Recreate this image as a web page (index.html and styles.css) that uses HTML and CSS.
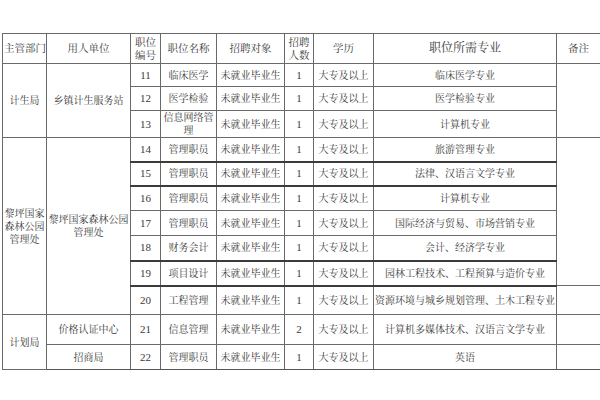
FILE: index.html
```html
<!DOCTYPE html>
<html lang="zh-CN">
<head>
<meta charset="utf-8">
<link rel="stylesheet" href="styles.css">
</head>
<body>
<div class="page">
<table class="grid">
  <colgroup>
    <col class="c1"><col class="c2"><col class="c3"><col class="c4"><col class="c5"><col class="c6"><col class="c7"><col class="c8"><col class="c9">
  </colgroup>
  <tr class="h r-head">
    <td>主管部门</td><td>用人单位</td><td>职位<br>编号</td><td>职位名称</td><td>招聘对象</td><td>招聘<br>人数</td><td>学历</td><td class="big">职位所需专业</td><td>备注</td>
  </tr>
  <tr class="r23">
    <td rowspan="3">计生局</td><td rowspan="3">乡镇计生服务站</td><td class="num">11</td><td>临床医学</td><td>未就业毕业生</td><td class="num">1</td><td>大专及以上</td><td>临床医学专业</td><td rowspan="3"></td>
  </tr>
  <tr class="r24">
    <td class="num">12</td><td>医学检验</td><td>未就业毕业生</td><td class="num">1</td><td>大专及以上</td><td>医学检验专业</td>
  </tr>
  <tr class="r25">
    <td class="num">13</td><td class="tight">信息网络管<br>理</td><td>未就业毕业生</td><td class="num">1</td><td>大专及以上</td><td>计算机专业</td>
  </tr>
  <tr class="r24 thick">
    <td rowspan="7">黎坪国家<br>森林公园<br>管理处</td><td rowspan="7">黎坪国家森林公园<br>管理处</td><td class="num">14</td><td>管理职员</td><td>未就业毕业生</td><td class="num">1</td><td>大专及以上</td><td>旅游管理专业</td><td rowspan="6"></td>
  </tr>
  <tr class="r24 thick">
    <td class="num">15</td><td>管理职员</td><td>未就业毕业生</td><td class="num">1</td><td>大专及以上</td><td>法律、汉语言文学专业</td>
  </tr>
  <tr class="r25">
    <td class="num">16</td><td>管理职员</td><td>未就业毕业生</td><td class="num">1</td><td>大专及以上</td><td>计算机专业</td>
  </tr>
  <tr class="r25">
    <td class="num">17</td><td>管理职员</td><td>未就业毕业生</td><td class="num">1</td><td>大专及以上</td><td>国际经济与贸易、市场营销专业</td>
  </tr>
  <tr class="r25 thick">
    <td class="num">18</td><td>财务会计</td><td>未就业毕业生</td><td class="num">1</td><td>大专及以上</td><td>会计、经济学专业</td>
  </tr>
  <tr class="r25 thick">
    <td class="num">19</td><td>项目设计</td><td>未就业毕业生</td><td class="num">1</td><td>大专及以上</td><td>园林工程技术、工程预算与造价专业</td>
  </tr>
  <tr class="r29">
    <td class="num">20</td><td>工程管理</td><td>未就业毕业生</td><td class="num">1</td><td>大专及以上</td><td>资源环境与城乡规划管理、土木工程专业</td><td></td>
  </tr>
  <tr class="r30">
    <td rowspan="2">计划局</td><td>价格认证中心</td><td class="num">21</td><td>信息管理</td><td>未就业毕业生</td><td class="num">2</td><td>大专及以上</td><td>计算机多媒体技术、汉语言文学专业</td><td></td>
  </tr>
  <tr class="r25 last">
    <td>招商局</td><td class="num">22</td><td>管理职员</td><td>未就业毕业生</td><td class="num">1</td><td>大专及以上</td><td>英语</td><td></td>
  </tr>
</table>
</div>
</body>
</html>
```
FILE: styles.css
```css
html, body {
  margin: 0;
  padding: 0;
  background: #ffffff;
  overflow: hidden;
}
.page {
  width: 600px;
  height: 400px;
  padding: 33px 0 0 2px;
  box-sizing: border-box;
  overflow: hidden;
}
.grid {
  border-collapse: collapse;
  table-layout: fixed;
  width: 598px;
  font-family: "Liberation Serif", "Noto Serif CJK SC", "Noto Sans CJK SC", serif;
  font-size: 10px;
  color: #3a3a3a;
}
.c1 { width: 44px; }
.c2 { width: 84px; }
.c3 { width: 30px; }
.c4 { width: 56px; }
.c5 { width: 68px; }
.c6 { width: 29px; }
.c7 { width: 60px; }
.c8 { width: 183px; }
.c9 { width: 44px; }
.grid td {
  border: 1px solid #6a6a6a;
  padding: 0 1px;
  text-align: center;
  vertical-align: middle;
  line-height: 13px;
  white-space: nowrap;
  overflow: hidden;
}
.grid td.num { font-size: 11px; }
.h td { font-size: 10.5px; line-height: 13px; }
.h td.big { font-size: 12px; }
.r-head { height: 30px; }
.r23 { height: 23px; }
.r24 { height: 24px; }
.r25 { height: 25px; }
.r29 { height: 29px; }
.r30 { height: 30px; }
.thick td { border-bottom: 2px solid #3c3c3c; }
.thick td[rowspan] { border-bottom: 1px solid #6a6a6a; }
.last td { border-bottom: 1px solid #555555; }
```
